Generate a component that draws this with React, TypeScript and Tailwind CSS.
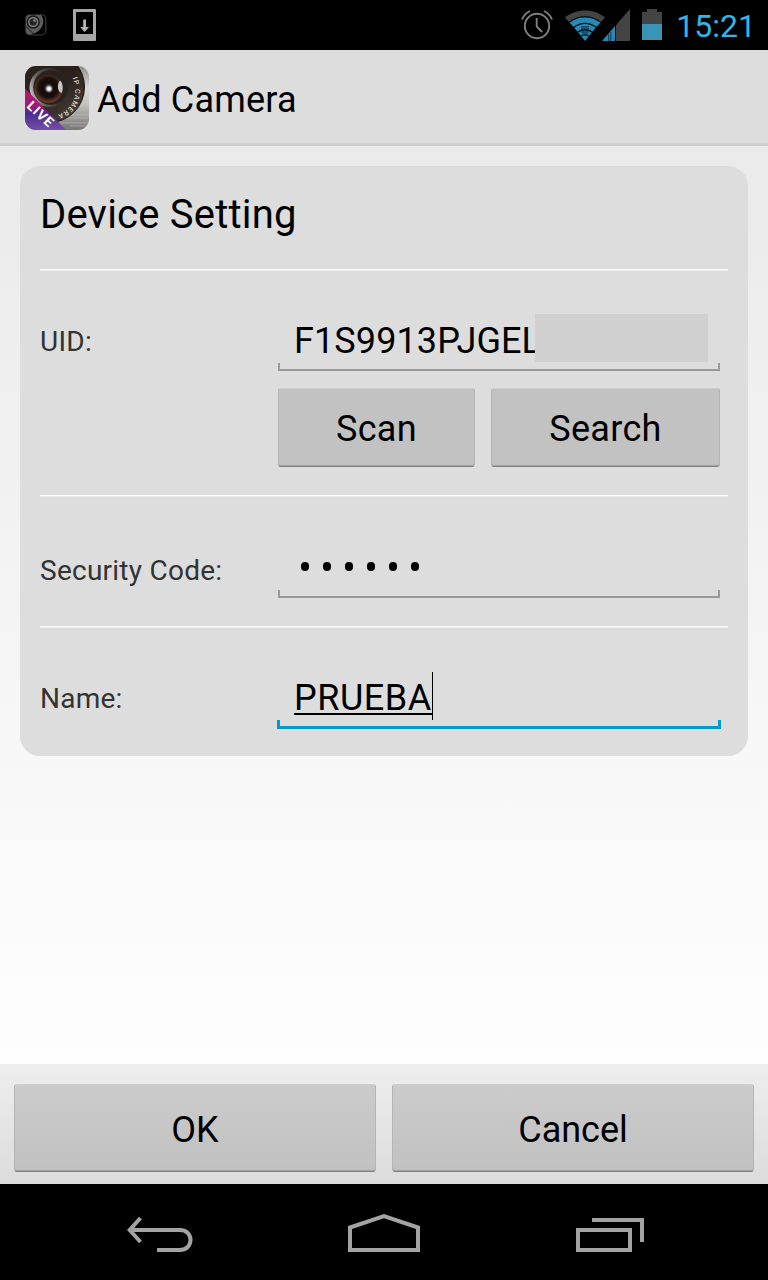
import { useState } from 'react'
import type { ReactNode } from 'react'
import clsx from 'clsx'

function CameraStatusIcon() {
  return (
    <svg width="22" height="22" viewBox="0 0 22 22" fill="none">
      <rect x="0.8" y="0.8" width="20" height="20" rx="4" stroke="#333" strokeWidth="1.3" />
      <path d="M1 8V4.500a3.500 3.500 0 0 1 3.500-3.500H16c3 3.500 3.300 9-.2 13.500C12.500 18.500 9 19.500 6 20.500H4.500A3.500 3.500 0 0 1 1 17z" fill="#5c5c5c" />
      <circle cx="8.200" cy="8" r="6" fill="#777" stroke="#151515" strokeWidth="1.400" />
      <circle cx="8.200" cy="8" r="3.600" fill="#222" />
      <circle cx="9.500" cy="6.500" r="1.500" fill="#777" />
      <path d="M1 12.500l8 8" stroke="#1a1a1a" strokeWidth="1" />
    </svg>
  )
}

function DownloadIcon() {
  return (
    <svg width="24" height="34" viewBox="0 0 24 34">
      <path fillRule="evenodd" d="M1 1h21a1 1 0 0 1 1 1v30a1 1 0 0 1-1 1H1a1 1 0 0 1-1-1V2a1 1 0 0 1 1-1zm2 3v22h17V4z" fill="#a6a6a6" />
      <path d="M10.200 11.500h2.800v7.500h3l-4.400 5-4.400-5h3z" fill="#b5b5b5" />
    </svg>
  )
}

function AlarmIcon() {
  return (
    <svg width="32" height="32" viewBox="0 0 32 32" fill="none" stroke="#808080" strokeWidth="1.900">
      <circle cx="16" cy="17" r="12.200" />
      <path d="M15.700 9v8.500l5.500 5.500M1 10.500C2.500 6.500 5 4 9 2M31 10.500C29.500 6.500 27 4 23 2" />
    </svg>
  )
}

function WifiIcon() {
  return (
    <svg width="40" height="32" viewBox="0 0 40 32">
      <path d="M0 8.500C11-.8 29-.8 40 8.500L36 13C27 5.500 13 5.500 4 13z" fill="#444" />
      <path d="M4.500 13.500C14 6 26 6 35.500 13.500L31.500 18C24 12.500 16 12.500 8.500 18z" fill="#2789b5" />
      <path d="M9 18.500c7-5 15-5 22 0l-3.500 4.200c-5-3.500-10-3.500-15 0z" fill="#2789b5" />
      <path d="M13 23.200c4-3 10-3 14 0L20 32z" fill="#2789b5" />
      <path d="M16 17h8v4h2.500L20 27l-6.500-6H16z" fill="#17475d" opacity="0.800" />
      <path d="M4 13.400c9-7.500 23-7.500 32 0M8.500 18.500c7.500-5.400 15.500-5.400 23 0M12.500 23.200c5-3.500 10-3.500 15 0M16 27c3-1.800 5-1.800 8 0" stroke="#061820" fill="none" strokeWidth="1.200" />
    </svg>
  )
}

function SignalIcon() {
  return (
    <svg width="28" height="32" viewBox="0 0 28 32">
      <path d="M28 0v32H14V16z" fill="#444" />
      <path d="M13 17v15H0z" fill="#2789b5" />
      <path d="M6.700 25v7M8.800 23v9" stroke="#0b3245" strokeWidth="0.900" />
    </svg>
  )
}

function BatteryIcon() {
  return (
    <svg width="20" height="31" viewBox="0 0 20 31">
      <path d="M0 3h5V0h10v3h5v12H0z" fill="#444" />
      <path d="M0 15h20v16H0z" fill="#3a94b8" />
    </svg>
  )
}

function AppIcon() {
  return (
    <svg width="64" height="64" viewBox="0 0 64 64">
      <defs>
        <clipPath id="tile">
          <rect width="64" height="64" rx="11" />
        </clipPath>
        <linearGradient id="metal" x1="0" y1="0" x2="0" y2="1">
          <stop offset="0" stopColor="#8f8d8b" />
          <stop offset="0.350" stopColor="#dcdbda" />
          <stop offset="0.600" stopColor="#c2c1bf" />
          <stop offset="1" stopColor="#777573" />
        </linearGradient>
        <linearGradient id="body" x1="0" y1="0" x2="0.800" y2="1">
          <stop offset="0" stopColor="#2c221b" />
          <stop offset="0.600" stopColor="#2b211c" />
          <stop offset="1" stopColor="#49413c" />
        </linearGradient>
        <linearGradient id="ring" x1="0" y1="0.600" x2="1" y2="0.300">
          <stop offset="0" stopColor="#c4c1bf" />
          <stop offset="0.250" stopColor="#68625f" />
          <stop offset="0.600" stopColor="#3a3432" />
          <stop offset="1" stopColor="#292322" />
        </linearGradient>
        <radialGradient id="lens" cx="0.500" cy="0.450">
          <stop offset="0" stopColor="#4a4548" />
          <stop offset="0.350" stopColor="#120c0c" />
          <stop offset="0.700" stopColor="#1a0f0b" />
          <stop offset="1" stopColor="#5d3826" />
        </radialGradient>
        <linearGradient id="ribbon" x1="0" y1="0" x2="0" y2="1">
          <stop offset="0" stopColor="#b5186f" />
          <stop offset="0.400" stopColor="#a01b77" />
          <stop offset="0.600" stopColor="#4a2b94" />
          <stop offset="1" stopColor="#7350a4" />
        </linearGradient>
        <radialGradient id="glow">
          <stop offset="0" stopColor="#fff" />
          <stop offset="0.350" stopColor="#eee" />
          <stop offset="1" stopColor="#999" stopOpacity="0" />
        </radialGradient>
        <path id="arc" d="M47.500 12C51 21 51 28 48.500 34C45.500 42 39 48 24 51" />
      </defs>
      <g clipPath="url(#tile)">
        <rect width="64" height="64" fill="url(#metal)" />
        <path d="M40 49h24M38 52h26M35 57h29M45 60h19M56 20h8M58 33h6" stroke="#e0dfde" strokeWidth="0.600" opacity="0.600" />
        <circle cx="24" cy="21" r="35.500" fill="url(#body)" stroke="#171210" strokeWidth="1" />
        <circle cx="24" cy="21.500" r="19.500" fill="url(#ring)" />
        <circle cx="25.500" cy="21.500" r="17.300" fill="#292120" />
        <circle cx="23.500" cy="23" r="14" fill="url(#lens)" />
        <path d="M35 14.500c3 2 3.500 9 1.500 12.500-4-1.500-5-8.500-1.500-12.500z" fill="#c9c5c5" />
        <circle cx="24" cy="22.800" r="4.500" fill="url(#glow)" />
        <text fontSize="7" fontFamily="Roboto, sans-serif" fontWeight="500" fill="#d8d2ce" letterSpacing="1">
          <textPath href="#arc">IP CAMERA</textPath>
        </text>
        <path d="M0 22.500L41 64H0z" fill="url(#ribbon)" />
      </g>
      <text transform="translate(1 41) rotate(43)" fontSize="13.500" fontFamily="Roboto, sans-serif" fontWeight="700" fill="#fff" letterSpacing="0.900">
        LIVE
      </text>
    </svg>
  )
}

function StatusBar() {
  return (
    <div className="flex h-[50px] items-center justify-between bg-black">
      <div className="flex items-center gap-[26px] pl-[25px]">
        <CameraStatusIcon />
        <DownloadIcon />
      </div>
      <div className="flex items-center pr-3">
        <AlarmIcon />
        <div className="ml-3 flex">
          <WifiIcon />
          <div className="-ml-[3px]">
            <SignalIcon />
          </div>
        </div>
        <div className="ml-3 -mt-px">
          <BatteryIcon />
        </div>
        <span className="ml-3.5 pt-0.5 text-[32px] leading-10 text-[#33b5e5]">15:21</span>
      </div>
    </div>
  )
}

function Divider() {
  return <div className="h-0.5 border-t border-white bg-[#ebebeb]" />
}

function Button({ children, className }: { children: ReactNode; className?: string }) {
  return (
    <button
      className={clsx(
        'rounded-[3px] border border-x-[#b4b4b4] border-t-[#cdcdcd] border-b-[#7f7f7f] pt-[3px] text-center text-[36px] text-black shadow-[inset_0_-1px_0_#a3a3a3]',
        className,
      )}
    >
      {children}
    </button>
  )
}

function Field({ focused, children }: { focused?: boolean; children: ReactNode }) {
  return (
    <div>
      <div className={clsx('relative flex h-12 pl-4 text-[36px] text-black', focused ? 'leading-[53px]' : 'leading-[55px]')}>
        {children}
      </div>
      <div
        className={clsx(
          focused
            ? '-mx-px h-[9px] border-x-3 border-b-3 border-[#0099cc]'
            : 'mt-px h-2 border-x-2 border-b-2 border-[#999]',
        )}
      />
    </div>
  )
}

type RowProps = { label: string; className: string; labelClass?: string; children: ReactNode }

function Row({ label, className, labelClass = 'pt-1', children }: RowProps) {
  return (
    <div className={clsx('flex pr-2', className)}>
      <label className={clsx('w-[238px] shrink-0 text-[28px] leading-[48px] tracking-[0.25px] text-[#333]', labelClass)}>
        {label}
      </label>
      <div className="flex-1">{children}</div>
    </div>
  )
}

function NavBar() {
  return (
    <div className="flex h-24 items-center justify-between bg-black pl-[126px] pr-[124px]">
      <svg width="68" height="40" viewBox="0 0 68 40" fill="none" stroke="#a3a3a3" strokeWidth="4">
        <path d="M4 18h50c14 0 14 20 0 20H31" />
        <path d="M14.500 6L3.700 18l10.800 12" />
      </svg>
      <svg width="72" height="40" viewBox="0 0 72 40" fill="none" stroke="#a3a3a3" strokeWidth="4">
        <path d="M2 38V15.500L36 4l34 11.500V38z" />
      </svg>
      <svg width="70" height="40" viewBox="-2 0 70 40" fill="none" stroke="#a3a3a3" strokeWidth="4">
        <path d="M2 18h52v20H2zM16 8h50v22" />
      </svg>
    </div>
  )
}

export default function App() {
  const [uid] = useState('F1S9913PJGEL')
  const [name] = useState('PRUEBA')

  return (
    <div className="flex h-[1280px] w-[768px] flex-col overflow-hidden font-[Roboto,sans-serif]">
      <StatusBar />

      <header className="flex h-24 items-center border-b-3 border-[#cfcfcf] bg-[#ddd] pl-[25px] pt-[3px]">
        <AppIcon />
        <h1 className="ml-2 pt-[3px] text-[36px] leading-[44px] tracking-[0.2px] text-black">Add Camera</h1>
      </header>

      <main className="flex-1 bg-linear-to-b from-[#eaeaea] to-[#fefefe] p-5">
        <section className="h-[590px] rounded-[20px] bg-[#ddd] px-5">
          <h2 className="h-[103px] pt-6 text-[40px] leading-[50px] tracking-[0.2px] text-black">Device Setting</h2>
          <Divider />

          <Row label="UID:" className="h-[224px] pt-[43px]">
            <Field>
              <span className="tracking-[0.1px]">{uid}</span>
              {/* covers the tail of the id */}
              <div className="absolute left-[257px] top-0 h-12 w-[173px] bg-[#d0d0d0]" />
            </Field>
            <div className="mt-[17px] flex gap-4">
              <Button className="h-[79px] w-[197px] bg-[#c2c2c2] tracking-[0.3px]">Scan</Button>
              <Button className="h-[79px] flex-1 bg-[#c2c2c2] tracking-[0.3px]">Search</Button>
            </div>
          </Row>
          <Divider />

          <Row label="Security Code:" className="h-[129px] pt-[44px]" labelClass="pt-1.5">
            <Field>
              <div className="flex items-center gap-[14px] pt-[3px] pl-[7px]">
                {[...Array(6)].map((_, i) => (
                  <span key={i} className="h-[9px] w-2 rounded-full bg-black" />
                ))}
              </div>
            </Field>
          </Row>
          <Divider />

          <Row label="Name:" className="h-[128px] pt-[44px]" labelClass="pt-[3px]">
            <Field focused>
              <span className="relative tracking-[0.5px]">
                {name}
                <span className="absolute bottom-[5px] left-0 h-0.5 w-full bg-black" />
              </span>
              <span className="h-12 w-px bg-black" />
            </Field>
          </Row>
        </section>
      </main>

      <footer className="flex h-[120px] gap-4 bg-linear-to-b from-[#eee] to-[#dcdcdc] px-3.5 pt-5">
        <Button className="h-[88px] flex-1 bg-linear-to-b from-[#cbcbcb] to-[#c1c1c1]">OK</Button>
        <Button className="h-[88px] flex-1 bg-linear-to-b from-[#cbcbcb] to-[#c1c1c1]">Cancel</Button>
      </footer>

      <NavBar />
    </div>
  )
}
